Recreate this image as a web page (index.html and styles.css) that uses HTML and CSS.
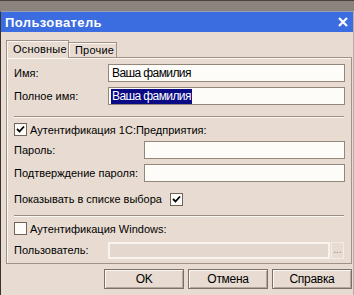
FILE: index.html
```html
<!DOCTYPE html>
<html>
<head>
<meta charset="utf-8">
<link rel="stylesheet" href="styles.css">
</head>
<body>
<div class="screen">
  <div class="topstrip"></div>
  <div class="window">
    <div class="titlebar">
      <span class="title">Пользователь</span>
      <svg class="close" width="10" height="10" viewBox="0 0 10 10"><path d="M1 1 L9 9 M9 1 L1 9" stroke="#fff" stroke-width="2.2" fill="none"/></svg>
    </div>
    <div class="body">
      <div class="tabs">
        <div class="tab active">Основные</div>
        <div class="tab">Прочие</div>
        <div class="tabfill"></div>
      </div>
      <div class="panel">
        <div class="row r1">
          <span class="label">Имя:</span>
          <div class="field wide"><span class="val">Ваша фамилия</span></div>
        </div>
        <div class="row r2">
          <span class="label">Полное имя:</span>
          <div class="field wide"><span class="val sel">Ваша фамилия</span></div>
        </div>
        <div class="sep s1"></div>
        <div class="row cbrow c1">
          <span class="cb"><svg width="9" height="9" viewBox="0 0 9 9"><path d="M1 4 L3.5 6.5 L8 1.5" stroke="#000" stroke-width="1.8" fill="none"/></svg></span>
          <span class="cblabel">Аутентификация 1С:Предприятия:</span>
        </div>
        <div class="row r3">
          <span class="label">Пароль:</span>
          <div class="field narrow"></div>
        </div>
        <div class="row r4">
          <span class="label">Подтверждение пароля:</span>
          <div class="field narrow"></div>
        </div>
        <div class="row r5">
          <span class="label">Показывать в списке выбора</span>
          <span class="cb cb-inline"><svg width="9" height="9" viewBox="0 0 9 9"><path d="M1 4 L3.5 6.5 L8 1.5" stroke="#000" stroke-width="1.8" fill="none"/></svg></span>
        </div>
        <div class="sep s2"></div>
        <div class="row cbrow c2">
          <span class="cb"></span>
          <span class="cblabel">Аутентификация Windows:</span>
        </div>
        <div class="row r6">
          <span class="label">Пользователь:</span>
          <div class="field disabled"></div>
          <div class="dots">...</div>
        </div>
      </div>
      <div class="buttons">
        <div class="btn">OK</div>
        <div class="btn">Отмена</div>
        <div class="btn">Справка</div>
      </div>
    </div>
  </div>
</div>
</body>
</html>
```
FILE: styles.css
```css
html, body {
  margin: 0;
  padding: 0;
}
body {
  width: 354px;
  height: 295px;
  overflow: hidden;
  background: #e8dcd2;
  font-family: "Liberation Sans", Arial, sans-serif;
  font-size: 11px;
  color: #000;
}
.screen {
  width: 354px;
  height: 295px;
  display: flex;
  flex-direction: column;
}
.topstrip {
  height: 10px;
  background: #8c837e;
  border-top: 1px solid #4a4040;
}
.window {
  flex: 1;
  display: flex;
  flex-direction: column;
  border-left: 1px solid #3a3030;
  border-right: 1px solid #b8aca4;
  border-top: 1px solid #9a9fb8;
  background: #e8dcd2;
}
.titlebar {
  height: 20px;
  background: #3b6ce0;
  display: flex;
  align-items: center;
  justify-content: space-between;
  padding: 0 4px 0 4px;
}
.title {
  color: #fff;
  font-weight: bold;
  font-size: 13px;
  letter-spacing: 0.4px;
}
.close {
  display: block;
  margin-right: 1px;
}
.body {
  flex: 1;
  display: flex;
  flex-direction: column;
  padding: 8px 0 0 5px;
}
.tabs {
  display: flex;
  align-items: flex-end;
  height: 17px;
}
.tab {
  height: 14px;
  padding: 0 5px 0 6px;
  border: 1px solid #a09288;
  border-bottom: none;
  box-shadow: inset 1px 1px 0 #fbf7f3;
  line-height: 15px;
  font-size: 11px;
  letter-spacing: 0.2px;
  white-space: nowrap;
}
.tab.active {
  height: 17px;
  line-height: 17px;
  position: relative;
  z-index: 1;
  margin-bottom: -1px;
  background: #e8dcd2;
  width: 50px;
  padding: 0 5px 0 6px;
}
.tab + .tab {
  border-left: none;
  padding-left: 6px;
  width: 36px;
}
.tabfill {
  flex: 1;
}
.panel {
  width: 346px;
  height: 207px;
  border: 1px solid #a09288;
  box-shadow: inset 1px 1px 0 #fbf7f3;
  box-sizing: border-box;
  padding: 0 0 0 7px;
  display: flex;
  flex-direction: column;
}
.row {
  display: flex;
  align-items: center;
}
.label {
  width: 94px;
  white-space: nowrap;
}
.r1 { margin-top: 6px; height: 18px; }
.r2 { margin-top: 5px; height: 18px; }
.r3 { margin-top: 5px; height: 18px; }
.r4 { margin-top: 5px; height: 18px; }
.r5 { margin-top: 10px; height: 14px; }
.r6 { margin-top: 6px; height: 18px; }
.r3 .label, .r4 .label { width: 130px; }
.r5 .label { width: auto; margin-right: 8px; }
.field {
  height: 18px;
  box-sizing: border-box;
  background: #fefcf9;
  border: 1px solid #948679;
  display: flex;
  align-items: center;
  padding-left: 2px;
}
.field.wide { width: 237px; }
.field.narrow { width: 201px; }
.field.disabled {
  width: 222px;
  height: 17px;
  background: #e4d8ce;
  border: 2px solid #f8f3ee;
}
.dots {
  width: 13px;
  height: 17px;
  margin-left: 1px;
  box-sizing: border-box;
  border: 1px solid #f3ece5;
  color: #8c8078;
  font-size: 10px;
  line-height: 14px;
  text-align: center;
}
.val {
  font-size: 12px;
  letter-spacing: -0.6px;
  line-height: 15px;
  padding: 0 1px;
}
.val.sel {
  background: #0a0a84;
  color: #fff;
}
.sep {
  width: 330px;
  height: 1px;
  background: #9c8e84;
  border-bottom: 1px solid #fbf7f3;
}
.s1 { margin-top: 11px; }
.s2 { margin-top: 9px; }
.cbrow { height: 13px; }
.c1 { margin-top: 5px; }
.c2 { margin-top: 5px; }
.cb {
  width: 13px;
  height: 13px;
  box-sizing: border-box;
  border: 1px solid #6f635b;
  background: #fefcf9;
  display: flex;
  align-items: center;
  justify-content: center;
  flex: none;
}
.cblabel {
  margin-left: 3px;
}
.buttons {
  display: flex;
  justify-content: flex-end;
  gap: 4px;
  padding: 5px 1px 0 0;
}
.btn {
  width: 80px;
  height: 20px;
  box-sizing: border-box;
  border: 1px solid #7d7068;
  box-shadow: inset 1px 1px 0 #fbf7f3, inset -1px -1px 0 #b3a69c;
  text-align: center;
  line-height: 18px;
  font-size: 12px;
  font-weight: normal;
  letter-spacing: -0.3px;
}
```
